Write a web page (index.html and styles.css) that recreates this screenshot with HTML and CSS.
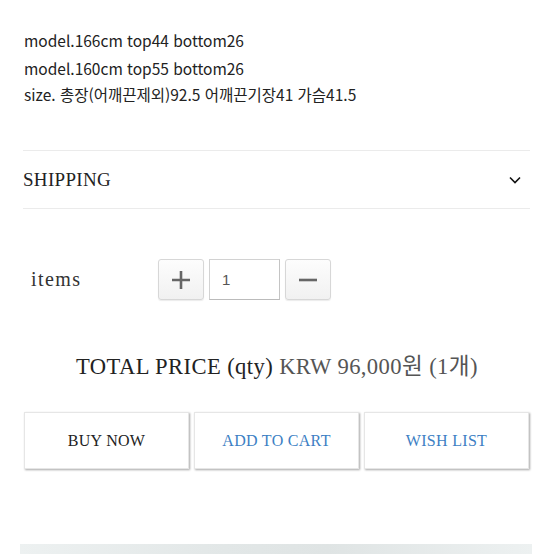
FILE: index.html
```html
<!DOCTYPE html>
<html lang="ko">
<head>
<meta charset="utf-8">
<link rel="stylesheet" href="styles.css">
</head>
<body>
<div class="page">
  <div class="desc">
    <p class="line first">model.166cm top44 bottom26</p>
    <p class="line">model.160cm top55 bottom26</p>
    <p class="line">size. 총장(어깨끈제외)92.5 어깨끈기장41 가슴41.5</p>
  </div>
  <div class="accordion">
    <span class="acc-title">SHIPPING</span>
    <svg class="chev" width="14" height="10" viewBox="0 0 14 10"><path d="M2 2.5 L7 7.5 L12 2.5" fill="none" stroke="#111" stroke-width="1.6"/></svg>
  </div>
  <div class="qty-row">
    <span class="items">items</span>
    <div class="qty">
      <button class="qbtn" type="button"><svg width="20" height="20" viewBox="0 0 20 20"><path d="M10 1v18M1 10h18" stroke="#666" stroke-width="2.6"/></svg></button>
      <div class="qinput">1</div>
      <button class="qbtn" type="button"><svg width="20" height="20" viewBox="0 0 20 20"><path d="M1 10h18" stroke="#666" stroke-width="2.6"/></svg></button>
    </div>
  </div>
  <div class="total">TOTAL PRICE (qty) <span class="price">KRW 96,000원 (1개)</span></div>
  <div class="actions">
    <div class="act dark">BUY NOW</div>
    <div class="act blue">ADD TO CART</div>
    <div class="act blue">WISH LIST</div>
  </div>
  <div class="bottom-bar"></div>
</div>
</body>
</html>
```
FILE: styles.css
```css
html, body {
  margin: 0;
  padding: 0;
  background: #fff;
}
.page {
  width: 554px;
  height: 554px;
  overflow: hidden;
  position: relative;
}
.desc {
  padding: 27px 0 0 24px;
  font-family: "Noto Sans CJK KR", "Noto Sans", sans-serif;
  font-size: 15.5px;
  color: #222;
}
.line {
  margin: 0;
  line-height: 26px;
}
.line.first {
  margin-bottom: 2px;
}
.accordion {
  margin: 43px 24px 0 23px;
  height: 57px;
  border-top: 1px solid #ebebeb;
  border-bottom: 1px solid #ebebeb;
  display: flex;
  align-items: center;
  justify-content: space-between;
}
.acc-title {
  font-family: "Liberation Serif", serif;
  font-size: 19px;
  color: #222;
  letter-spacing: 0.3px;
}
.chev {
  margin-right: 8px;
}
.qty-row {
  display: flex;
  align-items: center;
  margin-top: 50px;
  height: 41px;
}
.items {
  font-family: "Liberation Serif", serif;
  font-size: 20px;
  color: #333;
  letter-spacing: 1.4px;
  margin-left: 31px;
  width: 127px;
}
.qty {
  display: flex;
  gap: 5px;
}
.qbtn {
  width: 46px;
  height: 41px;
  padding: 0;
  margin: 0;
  border: 1px solid #d7d7d7;
  border-radius: 3px;
  background: linear-gradient(#fdfdfd, #f1f1f1);
  display: flex;
  align-items: center;
  justify-content: center;
  box-shadow: 0 1px 1px rgba(0,0,0,0.08);
}
.qinput {
  height: 39px;
  border: 1px solid #d2d2d2;
  border-bottom-color: #bbb;
  border-right-color: #c4c4c4;
  display: flex;
  align-items: center;
  padding-left: 12px;
  box-sizing: content-box;
  width: 57px;
  font-family: "Liberation Sans", sans-serif;
  font-size: 15px;
  color: #555;
}
.total {
  margin-top: 52px;
  text-align: center;
  font-family: "Liberation Serif", "Noto Sans CJK KR", serif;
  font-size: 22.6px;
  color: #222;
  letter-spacing: 0.4px;
  line-height: 30px;
}
.price {
  color: #555;
}
.actions {
  display: flex;
  gap: 5px;
  margin: 30px 0 0 24px;
}
.act {
  width: 163px;
  height: 55px;
  border: 1px solid #e6e6e6;
  box-shadow: 1px 1px 2px rgba(0,0,0,0.35);
  display: flex;
  align-items: center;
  justify-content: center;
  font-family: "Liberation Serif", serif;
  font-size: 16px;
  letter-spacing: 0.3px;
}
.act.dark { color: #222; }
.act.blue { color: #3d7fc4; }
.bottom-bar {
  position: absolute;
  left: 20px;
  top: 544px;
  width: 512px;
  height: 10px;
  background: linear-gradient(90deg, #edf1f1, #e2e7e7 40%, #dfe4e4 60%, #edf1f1);
}
```
